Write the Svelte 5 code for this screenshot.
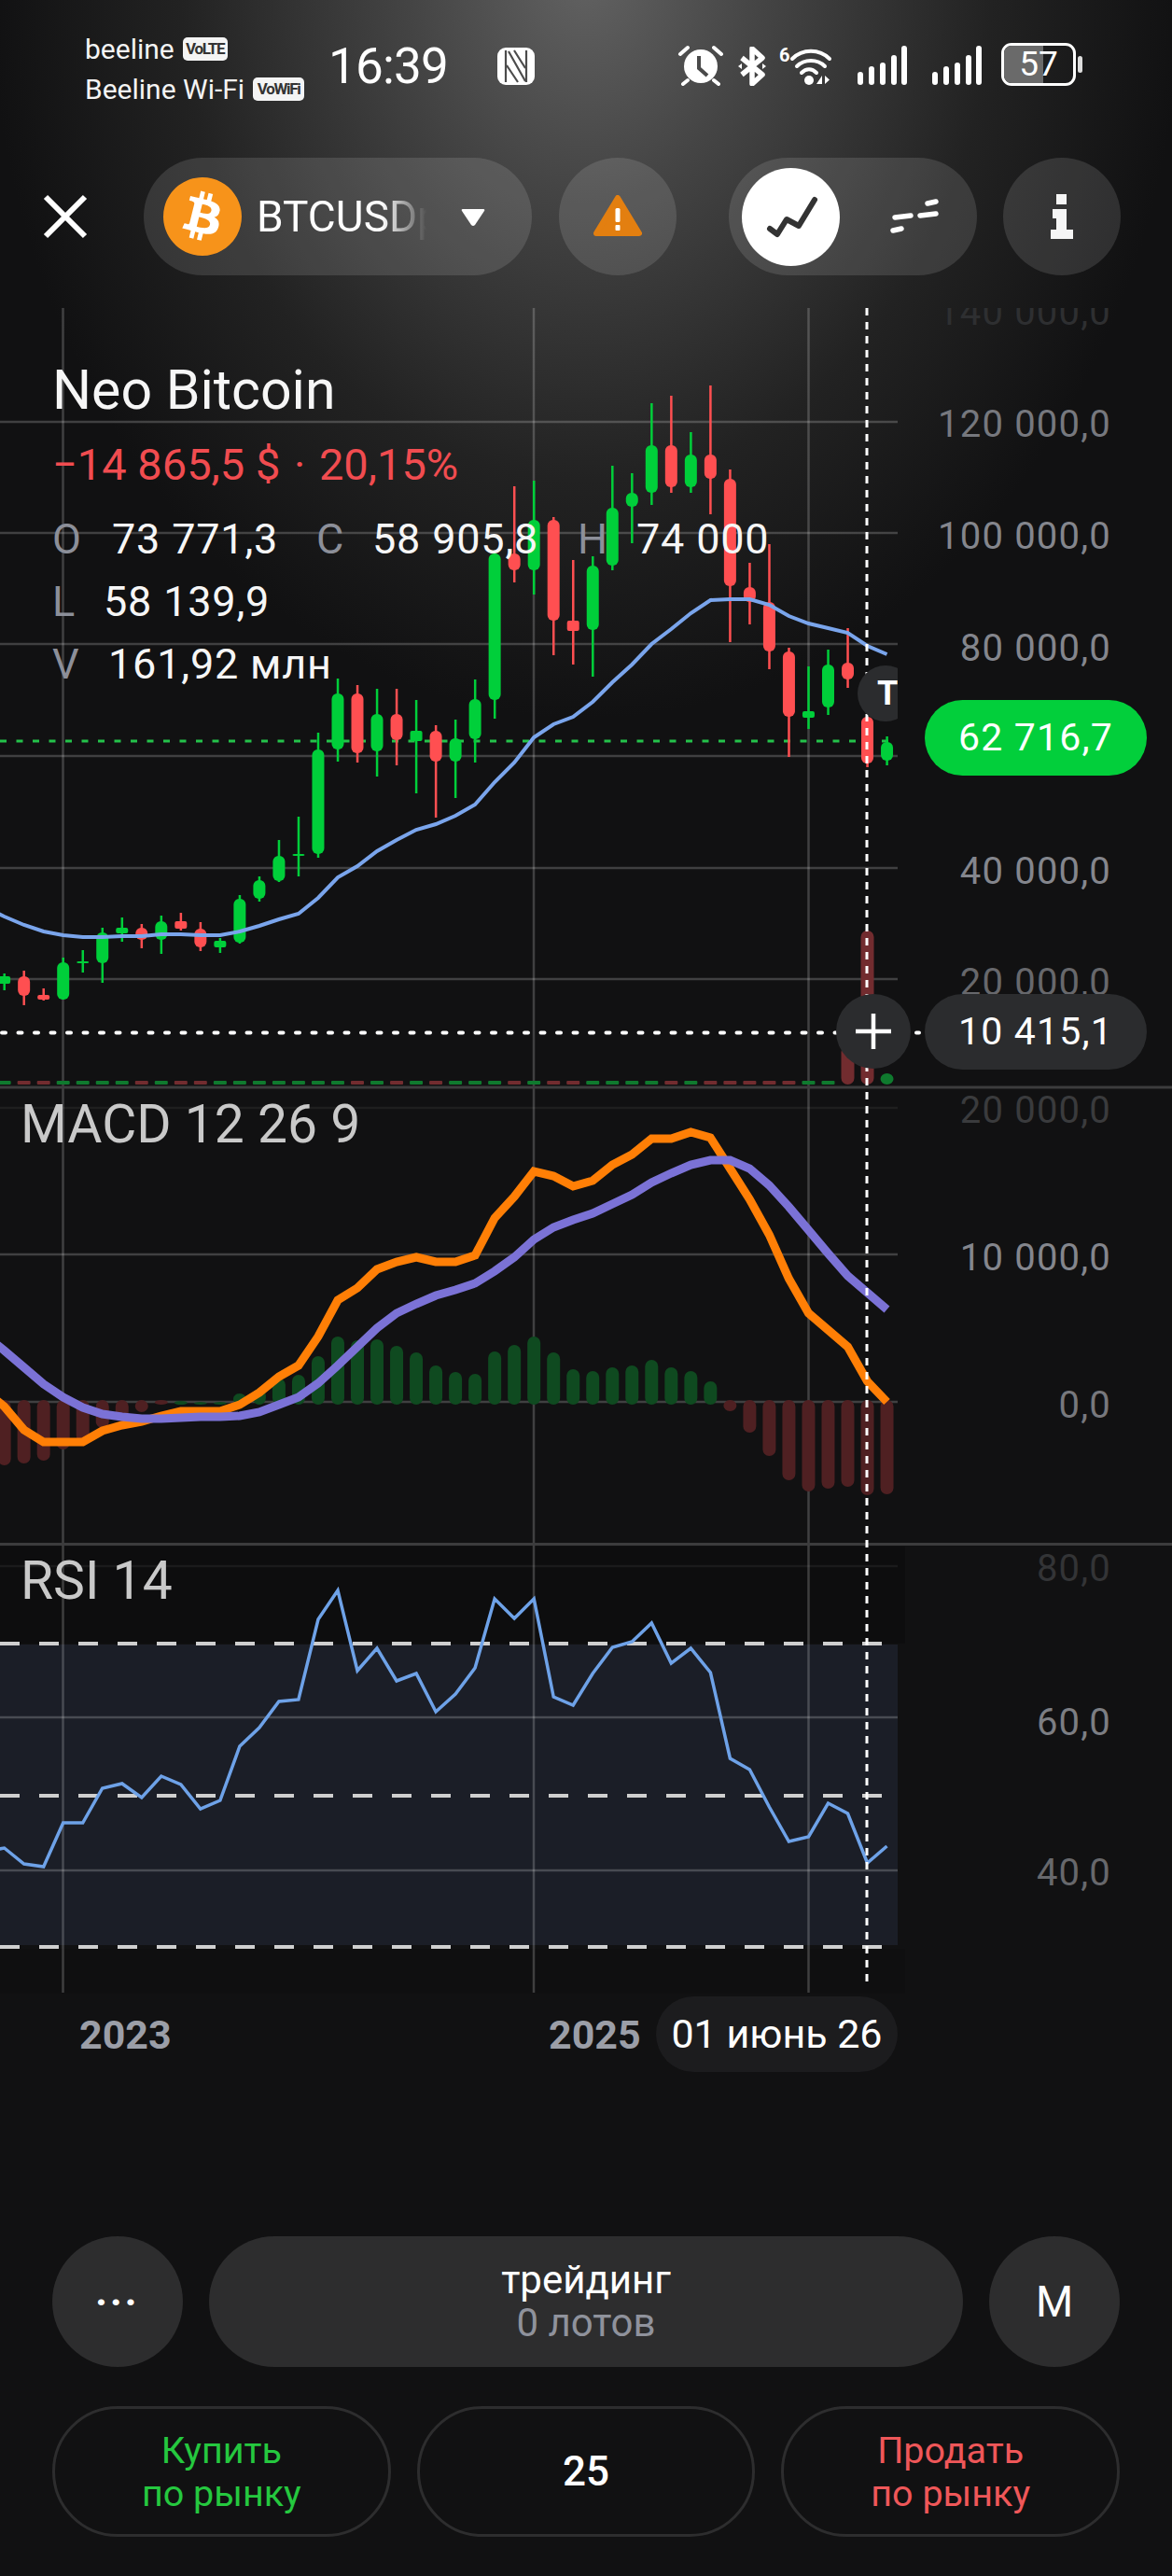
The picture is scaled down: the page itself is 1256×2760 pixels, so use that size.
<script>
  const kx = (k) => 67.7 + 21.02 * k;

  // [k, dir, wickTop, bodyTop, bodyBottom, wickBottom]
  const candles = [
    [-3,'g',1043,1046,1054,1061],[-2,'r',1040,1046,1067,1077],[-1,'r',1059,1066,1071,1072],
    [0,'g',1026,1031,1071,1071],[1,'g',1018,1030,1032,1042],[2,'g',994,999,1032,1053],
    [3,'g',983,994,1000,1009],[4,'r',990,994,1007,1016],[5,'g',981,987,1007,1022],
    [6,'r',978,987,995,997],[7,'r',988,995,1015,1019],[8,'g',1005,1008,1015,1021],
    [9,'g',959,963,1010,1011],[10,'g',939,943,963,966],[11,'g',900,917,944,945],
    [12,'g',875,915,916,939],[13,'g',785,803,915,919],[14,'g',727,743,803,816],
    [15,'r',734,743,807,817],[16,'g',738,765,805,832],[17,'r',738,765,793,820],
    [18,'g',750,783,794,850],[19,'r',777,783,816,876],[20,'g',771,791,816,855],
    [21,'g',728,749,792,817],[22,'g',590,593,750,770],[23,'r',521,593,611,624],
    [24,'g',515,557,611,637],[25,'r',554,557,665,702],[26,'r',600,665,676,712],
    [27,'g',596,606,675,725],[28,'g',499,544,606,611],[29,'g',507,528,543,582],
    [30,'g',432,477,528,541],[31,'r',424,477,522,528],[32,'g',463,487,522,528],
    [33,'r',413,487,513,551],[34,'r',503,513,628,688],[35,'r',603,629,645,669],
    [36,'r',583,645,698,717],[37,'r',694,698,768,811],[38,'g',714,762,769,781],
    [39,'g',696,712,758,766],[40,'r',673,710,728,737],[41,'r',768,768,818,822],
    [42,'g',789,795,815,820]
  ];

  // volume stubs; the last ones are taller
  const volTop = { 40: 1120, 41: 997, 42: 1150 };

  const ma = [972,982,991,998,1002,1004,1004,1003,1003,1001,1001,1002,1002,998,992,985,979,962,940,928,912,900,889,883,874,862,838,817,790,776,768,752,731,712,690,674,657,643,642,642,648,660,668,673,678,692,701];

  const macdFast = [1490,1507,1532,1545,1545,1545,1533,1527,1523,1517,1512,1512,1512,1505,1492,1475,1463,1432,1393,1380,1360,1352,1347,1352,1352,1345,1305,1282,1255,1260,1271,1265,1248,1237,1220,1220,1213,1219,1252,1285,1323,1370,1407,1425,1443,1480,1502];
  const macdSlow = [1430,1447,1465,1483,1497,1508,1515,1518,1520,1520,1519,1518,1518,1517,1513,1505,1497,1482,1463,1443,1423,1407,1397,1388,1382,1375,1362,1347,1328,1315,1307,1300,1290,1280,1267,1257,1248,1243,1243,1252,1270,1293,1318,1343,1367,1385,1403];

  // histogram bar ends, from k=-3
  const hist = [1570,1568,1565,1553,1545,1530,1520,1513,1505,1501,1502,1502,1493,1488,1477,1473,1453,1432,1436,1435,1442,1449,1463,1470,1472,1448,1441,1432,1449,1467,1469,1465,1463,1457,1465,1469,1480,1512,1535,1560,1586,1598,1595,1593,1602,1601];

  const rsi = [1984,1980,1997,2000,1953,1953,1916,1911,1926,1903,1912,1938,1929,1871,1851,1823,1821,1735,1704,1790,1766,1801,1793,1834,1815,1787,1713,1734,1713,1818,1827,1793,1765,1759,1739,1782,1766,1792,1884,1896,1936,1973,1968,1932,1943,1996,1978];

  const poly = (ys, from) => ys.map((y, i) => `${kx(from + i).toFixed(1)},${y}`).join(' ');

  const priceAxis = [
    { y: 334, t: '140 000,0', c: '#2e2f31' },
    { y: 454, t: '120 000,0', c: '#76787e' },
    { y: 574, t: '100 000,0', c: '#84868d' },
    { y: 694, t: '80 000,0', c: '#84868d' },
    { y: 933, t: '40 000,0', c: '#84868d' },
    { y: 1052, t: '20 000,0', c: '#67686c' },
    { y: 1189, t: '20 000,0', c: '#3a3b3d' },
    { y: 1347, t: '10 000,0', c: '#84868d' },
    { y: 1505, t: '0,0', c: '#77787d' },
    { y: 1680, t: '80,0', c: '#333436' },
    { y: 1845, t: '60,0', c: '#7c7e83' },
    { y: 2006, t: '40,0', c: '#67686c' }
  ];

  const grid = [452, 571, 690, 810, 930, 1049, 1344, 1502, 1840, 2004];
</script>

<div class="screen">
  <header class="status">
    <div class="carrier">
      <div class="sim">beeline <span class="badge">VoLTE</span></div>
      <div class="sim">Beeline Wi-Fi <span class="badge narrow">VoWiFi</span></div>
    </div>
    <div class="clock">16:39</div>
    <svg class="nfc" width="40" height="40" viewBox="0 0 40 40">
      <rect width="40" height="40" rx="9" fill="#fff" />
      <path d="M9 3V37M31 3V37M12 4L30 36M10 19L22 37M18 3L30 22" stroke="#4c4c4c" stroke-width="2.200" fill="none" />
    </svg>
    <div class="sys">
      <svg width="50" height="44" viewBox="0 0 50 44">
        <circle cx="25" cy="23" r="18" fill="#fff" />
        <path d="M23 12V25L32 33" stroke="#4a4a4a" stroke-width="4" fill="none" />
        <path d="M3 10L11 3M39 3L47 10M11 38L6 42M39 38L44 42" stroke="#fff" stroke-width="4" stroke-linecap="round" />
      </svg>
      <svg class="bt" width="32" height="42" viewBox="0 0 32 42">
        <path d="M5 12L27 30L16 40V2L27 12L5 30" stroke="#fff" stroke-width="5.500" fill="none" stroke-linejoin="round" />
        <path d="M1 21l4-3v6zM31 21l-4-3v6z" fill="#fff" />
      </svg>
      <svg class="wifi" width="62" height="44" viewBox="0 0 62 44">
        <text x="1" y="18" class="six">6</text>
        <path d="M15 15C26 4 44 4 55 15M20 23C28 15 42 15 50 23M25 30C30 25 36 25 41 30" stroke="#fff" stroke-width="4" fill="none" stroke-linecap="round" />
        <circle cx="33" cy="38" r="5" fill="#fff" />
        <path d="M41 42l6-9v9zM50 33v9l5-4.500z" fill="#fff" />
      </svg>
      <svg class="sig" width="54" height="43" viewBox="0 0 54 43">
        <rect x="0" y="28" width="6" height="14" rx="3" fill="#fff" />
        <rect x="12" y="22" width="6" height="20" rx="3" fill="#fff" />
        <rect x="24" y="18" width="6" height="24" rx="3" fill="#fff" />
        <rect x="36" y="10" width="6" height="32" rx="3" fill="#fff" />
        <rect x="47" y="0" width="6" height="42" rx="3" fill="#fff" />
      </svg>
      <svg class="sig two" width="54" height="43" viewBox="0 0 54 43">
        <rect x="0" y="28" width="6" height="14" rx="3" fill="#fff" />
        <rect x="12" y="22" width="6" height="20" rx="3" fill="#fff" />
        <rect x="24" y="18" width="6" height="24" rx="3" fill="#fff" />
        <rect x="36" y="10" width="6" height="32" rx="3" fill="#fff" />
        <rect x="47" y="0" width="6" height="42" rx="3" fill="#fff" />
      </svg>
      <div class="battery">
        <div class="cell"><span class="level"></span><span class="pct">57</span></div>
        <span class="nub"></span>
      </div>
    </div>
  </header>

  <nav class="toolbar">
    <svg class="close" width="48" height="48" viewBox="0 0 48 48">
      <path d="M3 3L45 45M45 3L3 45" stroke="#fff" stroke-width="6" />
    </svg>
    <div class="symbol pill">
      <svg class="coin" width="84" height="84" viewBox="0 0 24 24">
        <circle cx="12" cy="12" r="10" fill="#fff" />
        <path fill="#f7931a" d="M23.638 14.904c-1.602 6.43-8.113 10.34-14.542 8.736C2.67 22.05-1.244 15.525.362 9.105 1.962 2.67 8.475-1.243 14.9.358c6.43 1.605 10.342 8.115 8.738 14.548v-.002zm-6.35-4.613c.24-1.59-.974-2.45-2.64-3.03l.54-2.153-1.315-.33-.525 2.107c-.345-.087-.705-.167-1.064-.25l.526-2.127-1.32-.33-.54 2.165c-.285-.067-.565-.132-.84-.2l-1.815-.45-.35 1.407s.975.225.955.236c.535.136.63.486.615.766l-1.477 5.92c-.075.166-.24.406-.614.314.015.02-.96-.24-.96-.24l-.66 1.51 1.71.426.93.242-.54 2.19 1.32.327.54-2.17c.36.1.705.19 1.05.273l-.51 2.154 1.32.33.545-2.19c2.24.427 3.93.257 4.64-1.774.57-1.637-.03-2.58-1.217-3.196.854-.193 1.5-.76 1.68-1.93h.01zm-3.01 4.22c-.404 1.64-3.157.75-4.05.53l.72-2.9c.896.23 3.757.67 3.33 2.37zm.41-4.24c-.37 1.49-2.662.735-3.405.55l.654-2.64c.744.18 3.137.524 2.75 2.084v.006z" />
      </svg>
      <span class="ticker">BTCUSDp</span>
      <svg width="26" height="19" viewBox="0 0 26 19"><path d="M2 1H24Q26 1 25 3L15 18Q13 20 11 18L1 3Q0 1 2 1Z" fill="#fff" /></svg>
    </div>
    <div class="warn round">
      <svg width="52" height="46" viewBox="0 0 52 46">
        <path d="M26 3L49 41H3Z" fill="#e37f10" stroke="#e37f10" stroke-width="6" stroke-linejoin="round" />
        <rect x="23.500" y="14" width="5" height="15" rx="1.500" fill="#fff" />
        <rect x="23.500" y="32" width="5" height="6" rx="1" fill="#fff" />
      </svg>
    </div>
    <div class="modes pill">
      <div class="mode on">
        <svg width="60" height="48" viewBox="0 0 60 48">
          <path d="M7 37L15 43L25 27L38 34L55 6" stroke="#333" stroke-width="6" fill="none" stroke-linejoin="round" stroke-linecap="round" />
        </svg>
      </div>
      <svg class="dashes" width="56" height="38" viewBox="0 0 56 38">
        <path d="M41 5L50 3M33 18L50 16M6 20L23 18M4 34L13 32" stroke="#fff" stroke-width="5.500" stroke-linecap="round" />
      </svg>
    </div>
    <div class="info round">
      <svg width="26" height="48" viewBox="0 0 26 48">
        <path d="M7 0H18V11H7ZM3 16H18V38H25V48H1V38H7V26H3Z" fill="#f5f5f5" />
      </svg>
    </div>
  </nav>

  <main class="chart">
    <svg class="plot" width="1256" height="2101" viewBox="0 295 1256 2101">
      <!-- darker bands around the rsi block -->
      <rect x="0" y="1657" width="970" height="104" fill="#0d0d0e" />
      <rect x="0" y="2088" width="970" height="48" fill="#0f0f10" />
      <rect x="0" y="1762" width="962" height="322" fill="#1b1e27" />

      {#each grid as y}
        <line x1="0" x2="962" y1={y} y2={y} class="gridline" />
      {/each}
      <line x1="0" x2="962" y1="1187" y2="1187" class="gridline faint" />
      <line x1="0" x2="962" y1="1678" y2="1678" class="gridline faint" />
      <line x1="67.5" x2="67.5" y1="330" y2="2135" class="gridline" />
      <line x1="572" x2="572" y1="330" y2="2135" class="gridline" />
      <line x1="866.500" x2="866.500" y1="330" y2="2135" class="gridline" />

      <line x1="0" x2="1256" y1="1165" y2="1165" class="pane-line" />
      <line x1="0" x2="1256" y1="1654.500" y2="1654.500" class="pane-line" />

      <!-- volume -->
      {#each candles as [k, dir]}
        <rect
          x={kx(k) - 7}
          y={volTop[k] ?? 1158}
          width="14"
          height={1162 - (volTop[k] ?? 1158)}
          rx={volTop[k] ? 7 : 1}
          class={dir === 'g' ? 'vol-up' : 'vol-down'}
        />
      {/each}

      <line x1="0" x2="962" y1="794" y2="794" class="last-line" />

      <!-- candles -->
      {#each candles as [k, dir, wt, bt, bb, wb]}
        <g class={dir === 'g' ? 'up' : 'down'}>
          <rect x={kx(k) - 1.2} y={wt} width="2.500" height={wb - wt} />
          <rect x={kx(k) - 6.500} y={bt} width="13" height={Math.max(bb - bt, 2)} rx={bb - bt > 12 ? 6 : 2} />
        </g>
      {/each}
      <polyline points={poly(ma, -4)} class="ma" />

      <!-- macd -->
      {#each hist as y, i}
        {@const up = y < 1503}
        <rect
          x={kx(i - 3) - 7}
          y={up ? y : 1500}
          width="14"
          height={up ? 1505 - y : y - 1500}
          rx="7"
          class={up ? 'hist-up' : 'hist-down'}
        />
      {/each}
      <polyline points={poly(macdFast, -4)} class="macd-fast" />
      <polyline points={poly(macdSlow, -4)} class="macd-slow" />

      <!-- rsi -->
      <line x1="0" x2="946" y1="1761" y2="1761" class="rsi-band" />
      <line x1="0" x2="946" y1="1924" y2="1924" class="rsi-band" />
      <line x1="0" x2="946" y1="2086" y2="2086" class="rsi-band" />
      <polyline points={poly(rsi, -4)} class="rsi" />

      <!-- crosshair -->
      <line x1="929" x2="929" y1="330" y2="2125" class="cross-v" />
      <line x1="2" x2="985" y1="1106.500" y2="1106.500" class="cross-h" />

      <!-- axis -->
      <clipPath id="top-clip"><rect x="970" y="330" width="286" height="60" /></clipPath>
      <clipPath id="macd-clip"><rect x="970" y="1172" width="286" height="60" /></clipPath>
      {#each priceAxis as a, i}
        <text
          x="1191"
          y={a.y + 14}
          class="axis"
          fill={a.c}
          clip-path={i === 0 ? 'url(#top-clip)' : i === 6 ? 'url(#macd-clip)' : undefined}
        >{a.t}</text>
      {/each}

      <text x="85" y="2195" class="year">2023</text>
      <text x="588" y="2195" class="year">2025</text>
    </svg>

    <div class="legend">
      <div class="name">Neo Bitcoin</div>
      <div class="change">−14 865,5 $ <span class="sep">·</span> 20,15%</div>
      <div class="ohlc">
        <span class="k">O</span><span>73 771,3</span>
        <span class="k">C</span><span>58 905,8</span>
        <span class="k">H</span><span>74 000</span>
      </div>
      <div class="row low"><span class="k">L</span><span>58 139,9</span></div>
      <div class="row vol"><span class="k">V</span><span>161,92 млн</span></div>
    </div>

    <div class="macd-name pane-name">MACD 12 26 9</div>
    <div class="rsi-name pane-name">RSI 14</div>

    <div class="tag"><span>T</span></div>
    <div class="price last">62 716,7</div>
    <div class="price cursor">10 415,1</div>
    <div class="plus">
      <svg width="40" height="40" viewBox="0 0 40 40"><path d="M20 1V39M1 20H39" stroke="#fff" stroke-width="4.500" /></svg>
    </div>
    <div class="date">01 июнь 26</div>
  </main>

  <footer class="controls">
    <div class="row-top">
      <div class="circle more">...</div>
      <div class="trade">
        <span class="trade-title">трейдинг</span>
        <span class="trade-sub">0 лотов</span>
      </div>
      <div class="circle m">M</div>
    </div>
    <div class="row-bottom">
      <div class="outline buy">Купить<br />по рынку</div>
      <div class="outline qty">25</div>
      <div class="outline sell">Продать<br />по рынку</div>
    </div>
  </footer>
</div>

<style>
  :global(body) {
    margin: 0;
    background: #111112;
  }

  .screen {
    width: 1256px;
    height: 2760px;
    display: flex;
    flex-direction: column;
    overflow: hidden;
    color: #fff;
    font-family: Roboto, "Noto Sans", sans-serif;
    background:
      radial-gradient(ellipse 640px 800px at 628px -30px, #626262 0%, #444 30%, #222 68%, #111112 100%),
      #111112;
  }

  /* status bar */
  .status {
    height: 169px;
    box-sizing: border-box;
    padding: 31px 96px 0 91px;
    display: flex;
    align-items: flex-start;
  }
  .carrier {
    width: 261px;
    font-size: 30px;
    line-height: 43px;
    color: #f4f4f4;
  }
  .sim {
    display: flex;
    align-items: center;
    gap: 9px;
    white-space: nowrap;
  }
  .badge {
    width: 48px;
    height: 25px;
    border-radius: 5px;
    background: #f4f4f4;
    color: #333;
    font-size: 17px;
    font-weight: 700;
    line-height: 25px;
    text-align: center;
    letter-spacing: -1.300px;
  }
  .badge.narrow {
    width: 55px;
  }
  .clock {
    width: 181px;
    margin-top: 9px;
    font-size: 53px;
    line-height: 62px;
    font-weight: 400;
    letter-spacing: -0.800px;
  }
  .nfc {
    margin-top: 20px;
  }
  .sys {
    margin-left: auto;
    padding-top: 17px;
    display: flex;
    align-items: flex-start;
    gap: 13px;
  }
  .bt {
    margin: 2px 0 0 1px;
  }
  .wifi {
    margin-left: -1px;
  }
  .six {
    font-size: 20px;
    font-weight: 700;
    fill: #fff;
  }
  .sig {
    margin: 1px 0 0 10px;
  }
  .sig.two {
    margin-left: 13px;
  }
  .battery {
    display: flex;
    align-items: center;
    margin-left: 7px;
    margin-top: -2px;
    gap: 2px;
  }
  .cell {
    position: relative;
    width: 80px;
    height: 46px;
    box-sizing: border-box;
    border: 3px solid #fff;
    border-radius: 11px;
    overflow: hidden;
  }
  .level {
    position: absolute;
    inset: 0 43% 0 0;
    background: #6a6a6a;
  }
  .pct {
    position: absolute;
    inset: 0;
    text-align: center;
    font-size: 37px;
    line-height: 40px;
  }
  .nub {
    width: 5px;
    height: 18px;
    border-radius: 3px;
    background: #ddd;
  }

  /* toolbar */
  .toolbar {
    height: 126px;
    padding-left: 46px;
    display: flex;
    align-items: center;
    flex-shrink: 0;
  }
  .pill,
  .round {
    height: 126px;
    border-radius: 63px;
    background: rgba(255, 255, 255, 0.12);
    display: flex;
    align-items: center;
    box-sizing: border-box;
  }
  .round {
    width: 126px;
    justify-content: center;
  }
  .symbol {
    width: 416px;
    margin-left: 60px;
    padding-left: 21px;
  }
  .coin {
    flex-shrink: 0;
  }
  .ticker {
    width: 186px;
    margin: 0 33px 0 16px;
    overflow: hidden;
    font-size: 46px;
    white-space: nowrap;
    -webkit-mask-image: linear-gradient(to right, #000 72%, transparent 98%);
    mask-image: linear-gradient(to right, #000 72%, transparent 98%);
  }
  .warn {
    margin-left: 29px;
  }
  .modes {
    width: 266px;
    margin-left: 56px;
    padding-left: 14px;
  }
  .mode {
    width: 105px;
    height: 105px;
    border-radius: 50%;
    background: #fff;
    display: flex;
    align-items: center;
    justify-content: center;
  }
  .dashes {
    margin-left: 53px;
  }
  .info {
    margin-left: 28px;
  }

  /* chart */
  .chart {
    position: relative;
    height: 2101px;
    flex-shrink: 0;
    font-size: 45px;
    letter-spacing: 0.800px;
  }
  .plot {
    display: block;
  }
  .gridline {
    stroke: rgba(255, 255, 255, 0.2);
    stroke-width: 2.5;
  }
  .gridline.faint {
    stroke: rgba(255, 255, 255, 0.06);
  }
  .pane-line {
    stroke: #3c3c3d;
    stroke-width: 3;
  }
  .last-line {
    stroke: #24c24a;
    stroke-width: 3;
    stroke-dasharray: 7 10.500;
  }
  .up {
    fill: #00cf3a;
  }
  .down {
    fill: #ff4f51;
  }
  .vol-up {
    fill: #0f7a2e;
  }
  .vol-down {
    fill: #722c2f;
  }
  .ma {
    fill: none;
    stroke: #7aa5ec;
    stroke-width: 4;
  }
  .hist-up {
    fill: #0f4a20;
  }
  .hist-down {
    fill: #4f2022;
  }
  .macd-fast {
    fill: none;
    stroke: #ff7f06;
    stroke-width: 9;
  }
  .macd-slow {
    fill: none;
    stroke: #7b72d6;
    stroke-width: 9;
  }
  .rsi {
    fill: none;
    stroke: #6ea2e8;
    stroke-width: 3.500;
  }
  .rsi-band {
    stroke: #cfcfcf;
    stroke-width: 4;
    stroke-dasharray: 21 21;
  }
  .cross-v {
    stroke: #fff;
    stroke-width: 3;
    stroke-dasharray: 8 7;
  }
  .cross-h {
    stroke: #fff;
    stroke-width: 4;
    stroke-dasharray: 4 13.500;
    stroke-linecap: round;
  }
  .axis {
    font-size: 40px;
    letter-spacing: 1.200px;
    text-anchor: end;
  }
  .year {
    font-size: 43px;
    font-weight: 700;
    letter-spacing: 0;
    fill: #9b9ea7;
  }

  .legend {
    position: absolute;
    left: 56px;
    top: 90px;
    color: #f6f6f6;
    white-space: nowrap;
  }
  .name {
    font-size: 59px;
    line-height: 66px;
    letter-spacing: 0;
  }
  .change {
    margin-top: 19px;
    height: 56px;
    font-size: 47px;
    line-height: 56px;
    font-weight: 400;
    letter-spacing: 0;
    color: #f14c50;
  }
  .sep {
    margin: 0 3px;
  }
  .ohlc {
    margin-top: 26px;
    display: grid;
    grid-template-columns: 64px 219px 60px 220px 63px auto;
    line-height: 52px;
  }
  .row {
    margin-top: 15px;
    display: flex;
    line-height: 52px;
  }
  .low .k {
    width: 55px;
  }
  .vol .k {
    width: 60px;
  }
  .k {
    color: #8c8f99;
  }

  .pane-name {
    position: absolute;
    left: 22px;
    font-size: 57px;
    line-height: 60px;
    letter-spacing: 0;
    color: #c9c9c9;
  }
  .macd-name {
    top: 880px;
  }
  .rsi-name {
    top: 1369px;
  }

  .tag {
    position: absolute;
    left: 919px;
    top: 418px;
    width: 43px;
    height: 60px;
    overflow: hidden;
  }
  .tag span {
    display: block;
    width: 60px;
    height: 60px;
    border-radius: 50%;
    background: #2b2c2e;
    text-indent: 21px;
    font-size: 36px;
    font-weight: 700;
    line-height: 60px;
  }
  .price {
    position: absolute;
    left: 991px;
    width: 238px;
    height: 81px;
    border-radius: 41px;
    font-size: 41px;
    letter-spacing: 1.200px;
    line-height: 81px;
    text-align: center;
  }
  .last {
    top: 455px;
    background: #02cf3b;
  }
  .cursor {
    top: 770px;
    background: #2b2c2e;
  }
  .plus {
    position: absolute;
    left: 896px;
    top: 770px;
    width: 80px;
    height: 80px;
    border-radius: 50%;
    background: #2b2c2e;
    display: flex;
    align-items: center;
    justify-content: center;
  }
  .date {
    position: absolute;
    left: 703px;
    top: 1844px;
    width: 259px;
    height: 81px;
    border-radius: 41px;
    background: #1c1c1e;
    font-size: 43px;
    letter-spacing: 0;
    line-height: 81px;
    text-align: center;
    white-space: nowrap;
  }

  /* bottom controls */
  .controls {
    padding: 0 56px;
    display: flex;
    flex-direction: column;
    gap: 42px;
  }
  .row-top,
  .row-bottom {
    height: 140px;
    display: flex;
    gap: 28px;
  }
  .circle {
    width: 140px;
    height: 140px;
    box-sizing: border-box;
    border-radius: 50%;
    background: #2d2d2e;
    display: flex;
    align-items: center;
    justify-content: center;
    font-size: 46px;
    flex-shrink: 0;
  }
  .more {
    font-weight: 700;
    font-size: 44px;
    letter-spacing: 3px;
    padding-bottom: 22px;
  }
  .trade {
    flex: 1;
    border-radius: 70px;
    background: #2d2d2e;
    display: flex;
    flex-direction: column;
    align-items: center;
    justify-content: center;
    font-size: 42px;
    line-height: 46px;
  }
  .trade-sub {
    color: #8f929c;
  }
  .outline {
    flex: 1;
    box-sizing: border-box;
    border: 3px solid #2d2d2e;
    border-radius: 70px;
    padding-top: 22px;
    text-align: center;
    font-size: 39.5px;
    line-height: 46px;
  }
  .buy {
    color: #25c83f;
  }
  .sell {
    color: #ef5759;
  }
  .qty {
    font-size: 44px;
    font-weight: 500;
    line-height: 90px;
  }
</style>
